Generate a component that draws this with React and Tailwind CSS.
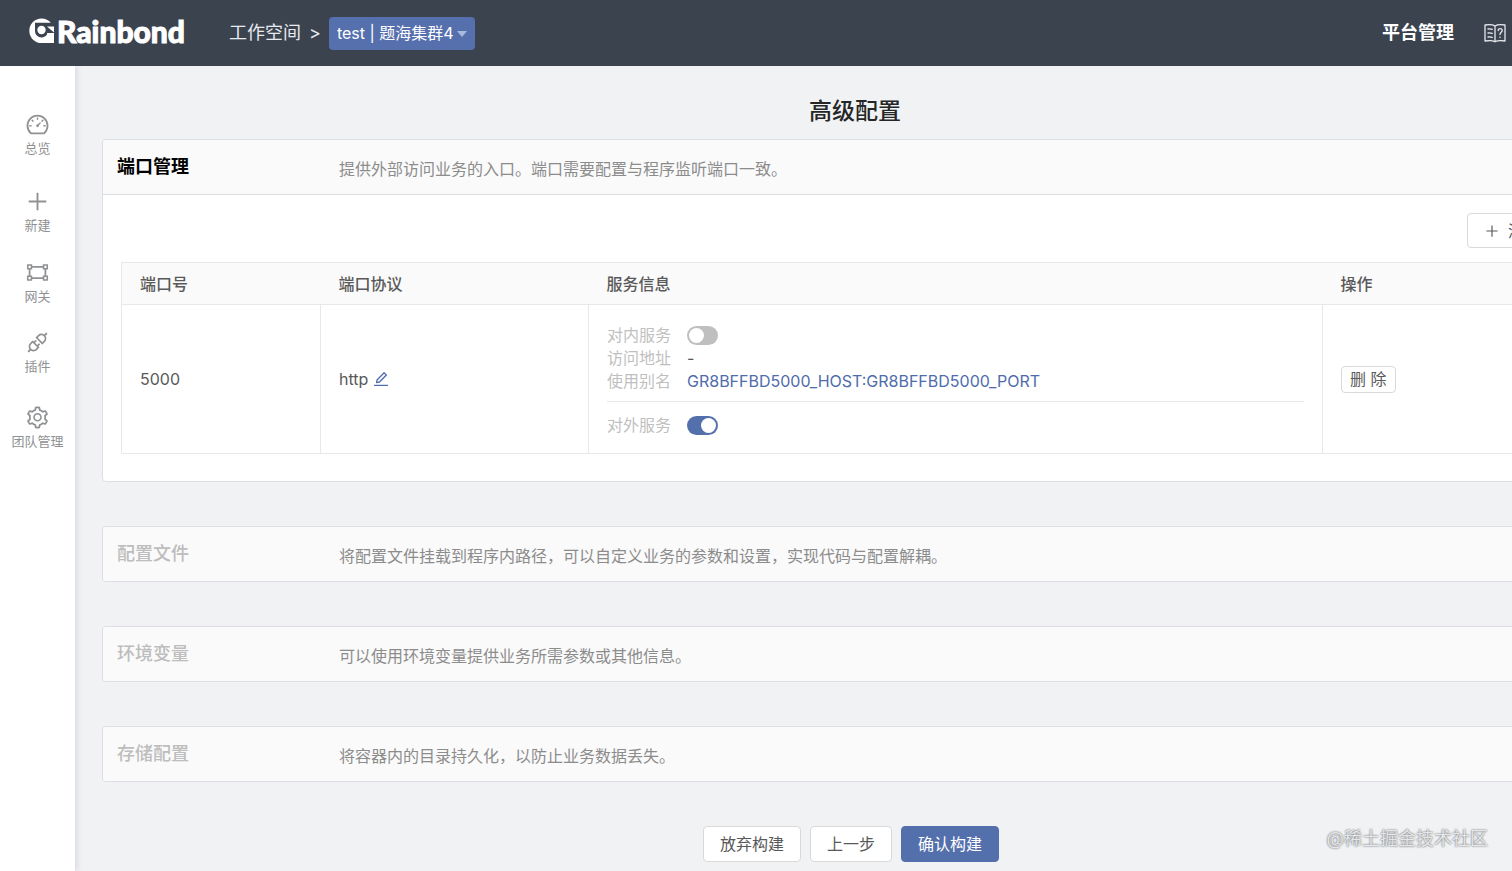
import {
  AiOutlineApi,
  AiOutlineDashboard,
  AiOutlineEdit,
  AiOutlineGateway,
  AiOutlinePlus,
  AiOutlineSetting,
} from "react-icons/ai";

const menus = [
  { label: "总览", icon: AiOutlineDashboard, gap: "" },
  { label: "新建", icon: AiOutlinePlus, gap: "mt-[30px]" },
  { label: "网关", icon: AiOutlineGateway, gap: "mt-6" },
  { label: "插件", icon: AiOutlineApi, gap: "mt-[23px]" },
  { label: "团队管理", icon: AiOutlineSetting, gap: "mt-7" },
];

const sections = [
  {
    title: "配置文件",
    desc: "将配置文件挂载到程序内路径，可以自定义业务的参数和设置，实现代码与配置解耦。",
  },
  { title: "环境变量", desc: "可以使用环境变量提供业务所需参数或其他信息。" },
  { title: "存储配置", desc: "将容器内的目录持久化，以防止业务数据丢失。" },
];

function Logo() {
  return (
    <a href="#" className="flex items-center pb-1 text-white">
      <svg viewBox="0 0 26 26" className="h-[26px] w-[26px]" aria-hidden="true">
        <path
          fill="currentColor"
          d="M12.500.5c4 0 7.200 1.700 9.300 4.300H6v8.200c0 3.700 2.900 6.400 6.500 6.400 2.500 0 4.600-1.200 5.700-3.200l-.2-1.200H25V25H12.500A12.200 12.200 0 0 1 .3 12.700 12.200 12.200 0 0 1 12.500.5Z"
        />
        <circle cx="12.500" cy="12" r="4.200" fill="currentColor" />
        <path fill="currentColor" d="M18 8.500h7v6z" />
      </svg>
      <span className="ml-0.5 font-[Lato] text-[30px] leading-8 font-black [-webkit-text-stroke:1px_white]">
        Rainbond
      </span>
    </a>
  );
}

function BookIcon() {
  return (
    <svg
      viewBox="0 0 22 20"
      className="h-5 w-[22px]"
      fill="none"
      stroke="currentColor"
      strokeWidth="1.3"
      strokeLinecap="round"
      strokeLinejoin="round"
      aria-hidden="true"
    >
      <path d="M11 3C8.500 1.300 4.500 1.500 1 2v16c3.500-.6 7.500-.8 10 .8 2.500-1.600 6.500-1.400 10-.8V2c-3.500-.5-7.500-.7-10 1v15" />
      <path d="M4 6c1.500-.2 3-.1 4.200.4M4 10c1.500-.2 3-.1 4.200.4M4 14c1.500-.2 3-.1 4.200.4" />
      <path d="M14.200 7.500c0-2.500 4-2.400 4 0 0 1.800-2.200 1.800-2.200 4M16 14.200v.2" />
    </svg>
  );
}

function Switch({ id, checked }) {
  return (
    <input
      id={id}
      type="checkbox"
      role="switch"
      defaultChecked={checked}
      className="relative h-[19px] w-[31px] shrink-0 appearance-none rounded-full bg-[#bfbfbf] before:absolute before:top-0.5 before:left-0.5 before:h-[15px] before:w-[15px] before:rounded-full before:bg-white checked:bg-[#5470ac] checked:before:left-3.5"
    />
  );
}

function SectionHead({ title, desc, active }) {
  return (
    <div className="flex h-[54px] items-center bg-[#fafafa] px-3.5">
      <h2
        className={
          active
            ? "w-[222px] text-[18px] leading-7 font-bold text-black"
            : "w-[222px] text-[18px] leading-7 font-medium text-[#bdbdbd]"
        }
      >
        {title}
      </h2>
      <p className="pt-1 text-[#8c8c8c]">{desc}</p>
    </div>
  );
}

export default function App() {
  return (
    <div className="relative flex min-h-screen flex-col overflow-hidden bg-[#f0f2f4] font-['Inter','Noto_Sans_CJK_SC',sans-serif] text-[16px] leading-6 text-[#595959]">
      <header className="z-10 flex h-[66px] items-center bg-[#3b434f] pr-1.5 pl-[29px] text-[#e6e9ee]">
        <Logo />
        <nav className="ml-11 flex items-center text-[18px]">
          <a href="#">工作空间</a>
          <span className="mx-2">&gt;</span>
          <div className="relative">
            <select
              aria-label="团队集群"
              className="h-[33px] w-[146px] appearance-none rounded bg-[#5670ad] pl-2 text-[16px] text-white"
            >
              <option>test | 题海集群4</option>
            </select>
            <span className="pointer-events-none absolute top-3.5 right-2 border-x-5 border-t-6 border-x-transparent border-t-[#a9bbdd]" />
          </div>
        </nav>
        <a href="#" className="ml-auto text-[18px] font-bold text-white">
          平台管理
        </a>
        <button type="button" aria-label="帮助文档" className="ml-[30px]">
          <BookIcon />
        </button>
      </header>

      <div className="flex flex-1">
        <aside className="z-5 w-[75px] shrink-0 bg-white pt-[46px] shadow-[2px_0_6px_rgba(0,21,41,0.1)]">
          {menus.map(({ label, icon: Icon, gap }) => (
            <a key={label} href="#" className={`flex flex-col items-center text-[#8f9193] ${gap}`}>
              <Icon size={25} />
              <span className="text-[13px] leading-[22px]">{label}</span>
            </a>
          ))}
        </aside>

        <main className="min-w-0 flex-1 overflow-hidden pt-7 pl-[27px]">
          {/* the form is wider than the visible area and runs off to the right */}
          <div className="-mr-24">
            <h1 className="mb-[11px] text-center text-[23px] leading-[34px] font-medium text-[#262626]">
              高级配置
            </h1>

            <section className="mb-11 overflow-hidden rounded border border-[#dcdee2] bg-white">
              <SectionHead title="端口管理" desc="提供外部访问业务的入口。端口需要配置与程序监听端口一致。" active />
              <div className="border-t border-[#dcdee2] px-[18px] pt-[18px] pb-[27px]">
                <div className="mb-3.5 flex justify-end">
                  <button
                    type="button"
                    className="flex h-[35px] items-center gap-2 rounded border border-[#d9d9d9] bg-white px-4"
                  >
                    <AiOutlinePlus size={16} />
                    添加端口
                  </button>
                </div>
                <table className="w-full table-fixed border-collapse border border-[#e8e8e8] text-left">
                  <thead>
                    <tr className="h-[42px] border-b border-[#e8e8e8] bg-[#fafafa]">
                      <th className="w-[199px] px-[18px] font-medium">端口号</th>
                      <th className="w-[268px] px-[18px] font-medium">端口协议</th>
                      <th className="px-[18px] font-medium">服务信息</th>
                      <th className="w-[266px] px-[18px] font-medium">操作</th>
                    </tr>
                  </thead>
                  <tbody>
                    <tr>
                      <td className="border-r border-[#e8e8e8] px-[18px]">5000</td>
                      <td className="border-r border-[#e8e8e8] px-[18px]">
                        <div className="flex items-center gap-1">
                          http
                          <button type="button" aria-label="修改协议" className="text-[#4f6cb0]">
                            <AiOutlineEdit size={18} />
                          </button>
                        </div>
                      </td>
                      <td className="border-r border-[#e8e8e8] px-[18px] pt-[19px] pb-4 leading-[23px]">
                        <div className="flex items-center">
                          <label htmlFor="inner" className="w-20 text-[#bfbfbf]">
                            对内服务
                          </label>
                          <Switch id="inner" checked={false} />
                        </div>
                        <div className="flex">
                          <span className="w-20 text-[#bfbfbf]">访问地址</span>
                          <span>-</span>
                        </div>
                        <div className="flex border-b border-[#e8e8e8] pb-2">
                          <span className="w-20 text-[#bfbfbf]">使用别名</span>
                          <a href="#" className="text-[#4f6cab]">
                            GR8BFFBD5000_HOST:GR8BFFBD5000_PORT
                          </a>
                        </div>
                        <div className="flex items-center pt-3">
                          <label htmlFor="outer" className="w-20 text-[#bfbfbf]">
                            对外服务
                          </label>
                          <Switch id="outer" checked />
                        </div>
                      </td>
                      <td className="px-[18px]">
                        <button
                          type="button"
                          className="h-[27px] rounded border border-[#d9d9d9] bg-white px-2 leading-6"
                        >
                          删 除
                        </button>
                      </td>
                    </tr>
                  </tbody>
                </table>
              </div>
            </section>

            {sections.map((item) => (
              <section
                key={item.title}
                className="mb-11 overflow-hidden rounded border border-[#dcdee2]"
              >
                <SectionHead title={item.title} desc={item.desc} />
              </section>
            ))}

            <div className="flex justify-center gap-[9px] pr-2 pb-2">
              <button type="button" className="h-9 rounded border border-[#d9d9d9] bg-white px-4">
                放弃构建
              </button>
              <button type="button" className="h-9 rounded border border-[#d9d9d9] bg-white px-4">
                上一步
              </button>
              <button
                type="button"
                className="h-9 rounded border border-[#5470ac] bg-[#5470ac] px-4 text-white"
              >
                确认构建
              </button>
            </div>
          </div>
        </main>
      </div>

      <span className="absolute right-6 bottom-5 text-[18px] text-[#e4e6e9] [text-shadow:0_0_2px_#444]">
        @稀土掘金技术社区
      </span>
    </div>
  );
}
